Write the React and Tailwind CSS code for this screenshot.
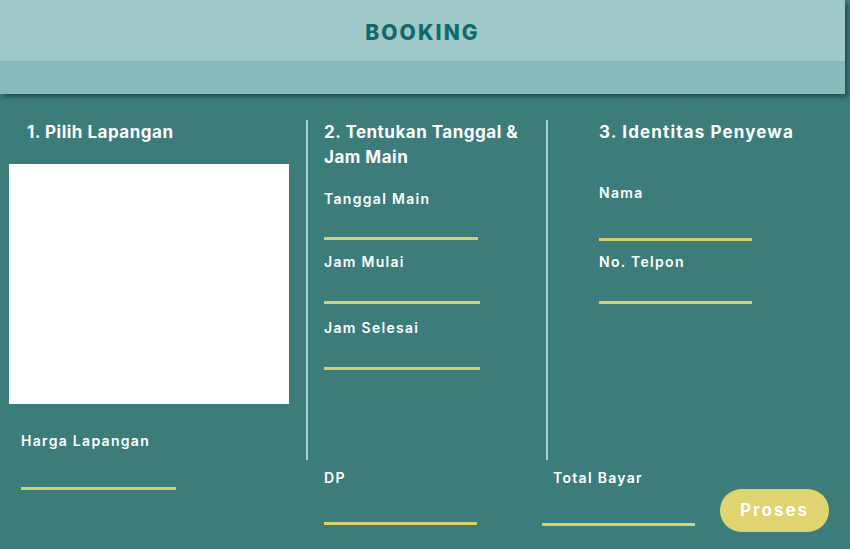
export default function App() {
  const font = { fontFamily: 'Inter, "Noto Sans", sans-serif' };
  const Label = ({ children, className = "" }) => (
    <div className={`text-[14px] leading-[20px] font-semibold tracking-[1.3px] text-white ${className}`}>{children}</div>
  );
  const Line = ({ className = "" }) => <div className={`h-[3px] bg-[#d6cf6b] ${className}`} />;
  return (
    <div className="w-[850px] h-[549px] bg-[#3c7d7b] overflow-hidden" style={font}>
      <header className="w-[845px] h-[94px] shadow-[3px_3px_4px_rgba(0,0,0,0.35)] flex flex-col">
        <div className="h-[61px] bg-[#9fc9c8] flex items-center justify-center pt-[4px]">
          <h1 className="text-[21px] font-extrabold tracking-[2.1px] text-[#0f6b69]">BOOKING</h1>
        </div>
        <div className="h-[33px] bg-[#89b9b8]" />
      </header>
      <main className="flex">
        <section className="w-[306px] pt-[26px] flex flex-col">
          <h2 className="pl-[27px] text-[17px] leading-[25px] font-bold tracking-[0.5px] text-white">1. Pilih Lapangan</h2>
          <div className="ml-[9px] mt-[19px] w-[280px] h-[240px] bg-white" />
          <Label className="ml-[21px] mt-[27px]">Harga Lapangan</Label>
          <Line className="ml-[21px] mt-[36px] w-[155px]" />
        </section>
        <div className="flex flex-col">
          <div className="flex mt-[26px] h-[340px]">
            <section className="w-[240px] border-l-2 border-[#a9cfcf] pl-[16px] flex flex-col">
              <h2 className="text-[17px] leading-[25px] font-bold tracking-[0.5px] text-white">2. Tentukan Tanggal &amp;<br />Jam Main</h2>
              <Label className="mt-[19px]">Tanggal Main</Label>
              <Line className="mt-[28px] w-[154px]" />
              <Label className="mt-[12px]">Jam Mulai</Label>
              <Line className="mt-[29px] w-[156px]" />
              <Label className="mt-[14px]">Jam Selesai</Label>
              <Line className="mt-[29px] w-[156px]" />
            </section>
            <section className="w-[298px] border-l-2 border-[#a9cfcf] pl-[51px] flex flex-col">
              <h2 className="text-[17px] leading-[25px] font-bold tracking-[1.15px] text-white">3. Identitas Penyewa</h2>
              <Label className="mt-[38px]">Nama</Label>
              <Line className="mt-[35px] w-[153px]" />
              <Label className="mt-[11px]">No. Telpon</Label>
              <Line className="mt-[29px] w-[153px]" />
            </section>
          </div>
          <div className="flex items-start">
            <div className="w-[236px] pl-[18px] pt-[8px] flex flex-col">
              <Label>DP</Label>
              <Line className="mt-[34px] w-[153px]" />
            </div>
            <div className="w-[178px] pt-[8px] flex flex-col">
              <Label className="ml-[11px]">Total Bayar</Label>
              <Line className="mt-[35px] w-[153px]" />
            </div>
            <button className="mt-[29px] w-[109px] h-[43px] rounded-full bg-[#dfd46f] text-white text-[17px] font-bold tracking-[2px] flex items-center justify-center">
              Proses
            </button>
          </div>
        </div>
      </main>
    </div>
  );
}
